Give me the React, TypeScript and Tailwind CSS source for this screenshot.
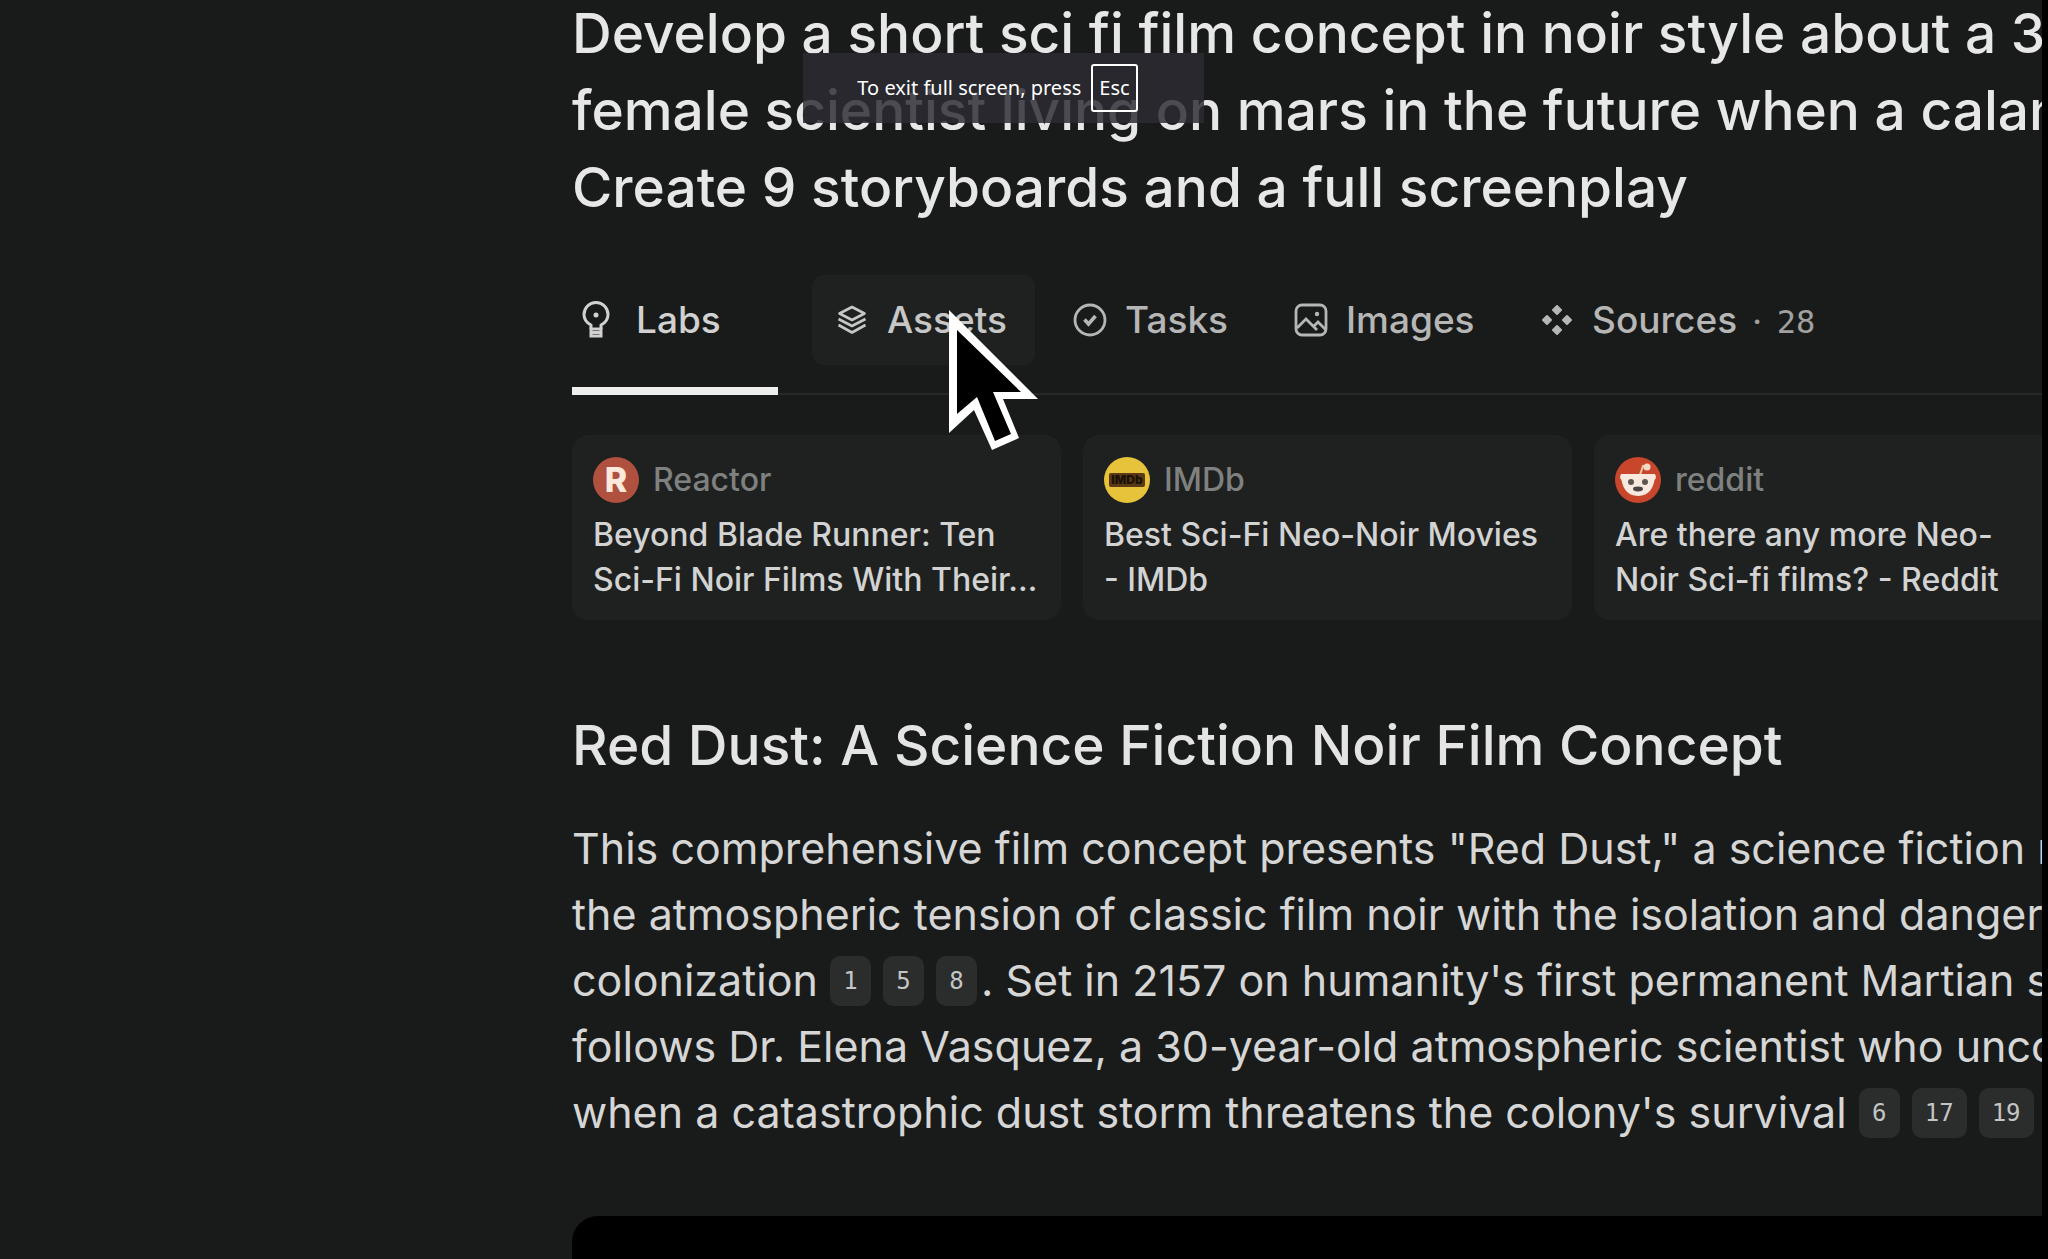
import type { ReactNode } from "react";

const promptLines = [
  "Develop a short sci fi film concept in noir style about a 30",
  "female scientist living on mars in the future when a calam",
  "Create 9 storyboards and a full screenplay",
];

const sources = [
  {
    site: "Reactor",
    lines: ["Beyond Blade Runner: Ten", "Sci-Fi Noir Films With Their…"],
    logo: <ReactorLogo />,
  },
  {
    site: "IMDb",
    lines: ["Best Sci-Fi Neo-Noir Movies", "- IMDb"],
    logo: <ImdbLogo />,
  },
  {
    site: "reddit",
    lines: ["Are there any more Neo-", "Noir Sci-fi films? - Reddit"],
    logo: <RedditLogo />,
  },
];

function ReactorLogo() {
  return (
    <span className="flex size-[46px] items-center justify-center rounded-full bg-[#b0503f] text-[34px] leading-none font-extrabold text-[#fbe9dc]">
      R
    </span>
  );
}

function ImdbLogo() {
  return (
    <span className="flex size-[46px] items-center justify-center rounded-full bg-[#e6c33a]">
      <span className="rounded-xs bg-[#5a3a14] px-[2px] text-[12px] leading-[14px] font-black text-[#1c1206]">
        IMDb
      </span>
    </span>
  );
}

function RedditLogo() {
  return (
    <svg viewBox="0 0 46 46" className="size-[46px]" aria-hidden="true">
      <circle cx="23" cy="23" r="23" fill="#c8472c" />
      <path d="M25 18l3-9 4 1" fill="none" stroke="#f3c9a8" strokeWidth="2" />
      <circle cx="32" cy="10" r="3.500" fill="#f6d9c4" />
      <circle cx="8" cy="20" r="3" fill="#f6dccf" />
      <circle cx="38" cy="20" r="3" fill="#f6dccf" />
      <path d="M6 17h34c0 13-6 22-17 22S6 30 6 17z" fill="#f8e8de" />
      <circle cx="16" cy="25" r="3" fill="#5d5552" />
      <circle cx="30" cy="25" r="3" fill="#5d5552" />
      <ellipse cx="23" cy="32" rx="5" ry="2.400" fill="#4d4543" />
    </svg>
  );
}

function BulbIcon() {
  return (
    <svg viewBox="0 0 28 38" className="h-[38px] w-[28px]" fill="none" stroke="currentColor" strokeWidth="3" aria-hidden="true">
      <path d="M9 28v-4C5 22 2 18 2 13.500a12 12 0 0 1 24 0c0 4.500-3 8.500-7 10.500v4" strokeLinejoin="round" />
      <path d="M9 28h10v7H9zM9 31.500h10" />
      <circle cx="14" cy="14" r="2.500" fill="currentColor" stroke="none" />
    </svg>
  );
}

function LayersIcon() {
  return (
    <svg viewBox="0 0 30 30" className="size-[30px]" fill="none" stroke="currentColor" strokeWidth="2.600" strokeLinejoin="round" aria-hidden="true">
      <path d="M15 2l12.500 6.500L15 15 2.500 8.500z" />
      <path d="M1.500 14L15 21l13.500-7M1.500 20L15 27.500 28.500 20" />
    </svg>
  );
}

function CheckCircleIcon() {
  return (
    <svg viewBox="0 0 34 34" className="size-[34px]" fill="none" stroke="currentColor" strokeWidth="2.800" aria-hidden="true">
      <circle cx="17" cy="17" r="15" />
      <path d="M11.500 16.500l4 4.500 7-8" strokeWidth="3.600" />
    </svg>
  );
}

function ImageIcon() {
  return (
    <svg viewBox="0 0 34 34" className="size-[34px]" fill="none" stroke="currentColor" strokeWidth="2.800" aria-hidden="true">
      <rect x="2" y="2" width="30" height="30" rx="6" />
      <path d="M3 25l9-9 11 11M20 23l4-4 8 8" />
      <circle cx="23" cy="11" r="2.200" fill="currentColor" stroke="none" />
    </svg>
  );
}

function SourcesIcon() {
  return (
    <svg
      viewBox="0 0 30 30"
      className="size-[30px]"
      fill="currentColor"
      stroke="currentColor"
      strokeWidth="2"
      strokeLinejoin="round"
      aria-hidden="true"
    >
      <path d="M15 1l4 4-4 4-4-4zM15 21l4 4-4 4-4-4zM5 11l4 4-4 4-4-4zM25 11l4 4-4 4-4-4z" />
    </svg>
  );
}

function Cite({ children }: { children: ReactNode }) {
  return (
    <a
      href="#sources"
      className="mr-3 inline-flex h-[50px] min-w-[41px] items-center justify-center rounded-[10px] bg-[#2b2c2c] px-[13px] align-[7px] font-['DejaVu_Sans_Mono',monospace] text-[24px] leading-none text-[#c4c5c4] last:mr-1"
    >
      {children}
    </a>
  );
}

function ExitHint() {
  return (
    <div className="absolute top-[53px] left-[803px] flex h-[70px] w-[401px] items-center justify-center gap-[10px] bg-[#2b2b32]/83 pr-3 font-['Noto_Sans',sans-serif] text-[20px] text-white">
      <span>To exit full screen, press</span>
      <kbd className="flex h-[48px] items-center rounded-[3px] border-2 border-white px-[6px] font-['Noto_Sans',sans-serif]">
        Esc
      </kbd>
    </div>
  );
}

function Cursor() {
  return (
    <svg viewBox="0 0 92 146" className="absolute top-[308px] left-[947px] h-[146px] w-[92px]" aria-hidden="true">
      <path d="M2 2l89 89H56l16 39-27 12-18-40-25 23z" fill="#fff" />
      <path d="M10 22l64 62H46l18 42-16 7-18-44-20 17z" fill="#000" />
    </svg>
  );
}

export default function App() {
  return (
    <div className="relative min-h-screen overflow-hidden bg-black pr-[6px] font-['Inter',sans-serif]">
      <main className="flex min-h-screen flex-col overflow-hidden bg-[#191b1a] pl-[572px] whitespace-nowrap text-[#d5d6d5]">
        <h1 className="-mt-[5px] text-[55px] leading-[77px] font-medium text-[#e6e7e6]">
          {promptLines.map((line) => (
            <span className="block" key={line}>
              {line}
            </span>
          ))}
        </h1>

        <nav className="mt-[49px] flex h-[120px] items-start border-b-2 border-[#272928] text-[37px] font-medium text-[#b5b6b5]">
          <button className="flex h-[120px] w-[206px] items-start border-b-8 border-[#eeefec] pl-[10px] text-[#d0d1d0]">
            <span className="flex h-[90px] items-center gap-[26px]">
              <BulbIcon />
              Labs
            </span>
          </button>
          <button className="ml-[34px] flex h-[90px] w-[223px] items-center gap-[20px] rounded-[12px] bg-[#1f2120] pl-[25px] text-[#c6c7c6]">
            <LayersIcon />
            Assets
          </button>
          <button className="ml-[38px] flex h-[90px] w-[221px] items-center gap-[18px]">
            <CheckCircleIcon />
            Tasks
          </button>
          <button className="flex h-[90px] w-[248px] items-center gap-[18px]">
            <ImageIcon />
            Images
          </button>
          <button className="flex h-[90px] items-center gap-[20px]">
            <SourcesIcon />
            <span className="flex items-baseline gap-[15px]">
              Sources
              <span className="text-[32px] text-[#a0a1a0]">·</span>
              <span className="font-['DejaVu_Sans_Mono',monospace] text-[32px] font-normal text-[#a0a1a0]">28</span>
            </span>
          </button>
        </nav>

        <section className="mt-10 flex gap-[22px]">
          {sources.map((source) => (
            <a
              href="#sources"
              className="w-[489px] shrink-0 rounded-[16px] bg-[#1f2120] px-[21px] pt-[22px] pb-[18px]"
              key={source.site}
            >
              <div className="flex h-[46px] items-center gap-[14px] text-[32px] font-medium text-[#7f8180]">
                {source.logo}
                <span>{source.site}</span>
              </div>
              <div className="mt-[9px] text-[32px] leading-[45px] font-medium text-[#d2d3d2]">
                {source.lines.map((line) => (
                  <span className="block" key={line}>
                    {line}
                  </span>
                ))}
              </div>
            </a>
          ))}
        </section>

        <h2 className="mt-[93px] text-[55px] leading-[64px] font-medium text-[#e3e4e3]">
          Red Dust: A Science Fiction Noir Film Concept
        </h2>

        <div className="mt-[38px] text-[43px] leading-[66px]">
          <div className="h-[66px]">This comprehensive film concept presents "Red Dust," a science fiction n</div>
          <div className="h-[66px]">the atmospheric tension of classic film noir with the isolation and danger</div>
          <div className="h-[66px]">
            colonization <Cite>1</Cite>
            <Cite>5</Cite>
            <Cite>8</Cite>. Set in 2157 on humanity's first permanent Martian s
          </div>
          <div className="h-[66px]">follows Dr. Elena Vasquez, a 30-year-old atmospheric scientist who unco</div>
          <div className="h-[66px]">
            when a catastrophic dust storm threatens the colony's survival <Cite>6</Cite>
            <Cite>17</Cite>
            <Cite>19</Cite>
          </div>
        </div>

        <div className="mt-[71px] -mr-10 min-h-[40px] flex-1 rounded-t-[26px] bg-black" />
      </main>

      <ExitHint />
      <Cursor />
    </div>
  );
}
